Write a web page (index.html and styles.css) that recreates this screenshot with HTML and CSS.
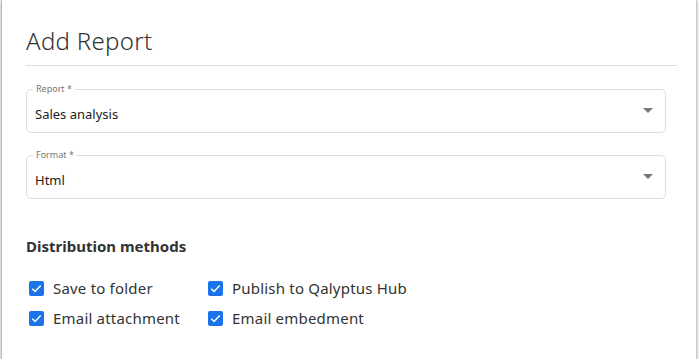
FILE: index.html
```html
<!DOCTYPE html>
<html lang="en">

<head>
    <meta charset="UTF-8" />
    <meta name="viewport" content="width=device-width, initial-scale=1.0" />
    <title>Add Report</title>
    <link rel="stylesheet" href="styles.css">
</head>

<body>
    <div class="card">
        <h2 class="title">Add Report</h2>

        <div class="field">
            <span class="field-label">Report *</span>
            <span class="field-value">Sales analysis</span>
            <span class="arrow"></span>
        </div>

        <div class="field">
            <span class="field-label">Format *</span>
            <span class="field-value">Html</span>
            <span class="arrow"></span>
        </div>

        <h3 class="section">Distribution methods</h3>

        <div class="methods">
            <label class="check">
                <span class="box"><svg viewBox="0 0 16 16" width="15" height="15"><path d="M3.5 8.2l3 3 6-6.4" fill="none" stroke="#fff" stroke-width="1.6" /></svg></span>
                Save to folder
            </label>
            <label class="check">
                <span class="box"><svg viewBox="0 0 16 16" width="15" height="15"><path d="M3.5 8.2l3 3 6-6.4" fill="none" stroke="#fff" stroke-width="1.6" /></svg></span>
                Publish to Qalyptus Hub
            </label>
            <label class="check">
                <span class="box"><svg viewBox="0 0 16 16" width="15" height="15"><path d="M3.5 8.2l3 3 6-6.4" fill="none" stroke="#fff" stroke-width="1.6" /></svg></span>
                Email attachment
            </label>
            <label class="check">
                <span class="box"><svg viewBox="0 0 16 16" width="15" height="15"><path d="M3.5 8.2l3 3 6-6.4" fill="none" stroke="#fff" stroke-width="1.6" /></svg></span>
                Email embedment
            </label>
        </div>
    </div>
</body>

</html>
```

FILE: styles.css
```css
body {
    font-family: "Noto Sans", Arial, sans-serif;
    background-color: #fff;
    margin: 0;
    padding: 0 2px 0 1px;
}

.card {
    height: 359px;
    box-sizing: border-box;
    padding: 25px 19px 0 24px;
    background-color: #fff;
    border-left: 1px solid #bbb;
    border-right: 1px solid #ccc;
    box-shadow: 0 1px 3px rgba(0, 0, 0, 0.35);
}

.title {
    margin: 0;
    font-size: 24px;
    line-height: 32px;
    font-weight: 300;
    letter-spacing: 0.3px;
    color: #333;
    padding-bottom: 8px;
    border-bottom: 1px solid #ddd;
}

.field {
    position: relative;
    display: flex;
    align-items: center;
    height: 44px;
    box-sizing: border-box;
    margin: 23px 11px 0 0;
    padding: 6px 0 0 8px;
    border: 1px solid #ddd;
    border-radius: 5px;
}

.field + .field {
    margin-top: 22px;
}

.field-label {
    position: absolute;
    left: 6px;
    top: -7px;
    padding: 0 3px;
    background-color: #fff;
    font-size: 9px;
    line-height: 12px;
    color: #777;
}

.field-value {
    flex: 1;
    font-size: 13px;
    color: #222;
}

.arrow {
    width: 0;
    height: 0;
    margin: -7px 12px 0 0;
    border-left: 5px solid transparent;
    border-right: 5px solid transparent;
    border-top: 5px solid #777;
}

.section {
    margin: 37px 0 0;
    font-size: 15px;
    line-height: 20px;
    font-weight: 700;
    color: #333;
}

.methods {
    display: grid;
    grid-template-columns: 179px auto;
    margin-top: 17px;
}

.check {
    display: flex;
    align-items: center;
    height: 30px;
    padding-left: 3px;
    font-size: 15px;
    letter-spacing: 0.2px;
    color: #333;
}

.box {
    display: block;
    width: 15px;
    height: 15px;
    margin-right: 9px;
    border-radius: 2px;
    background-color: #1a73e8;
}

.box svg {
    display: block;
}
```
